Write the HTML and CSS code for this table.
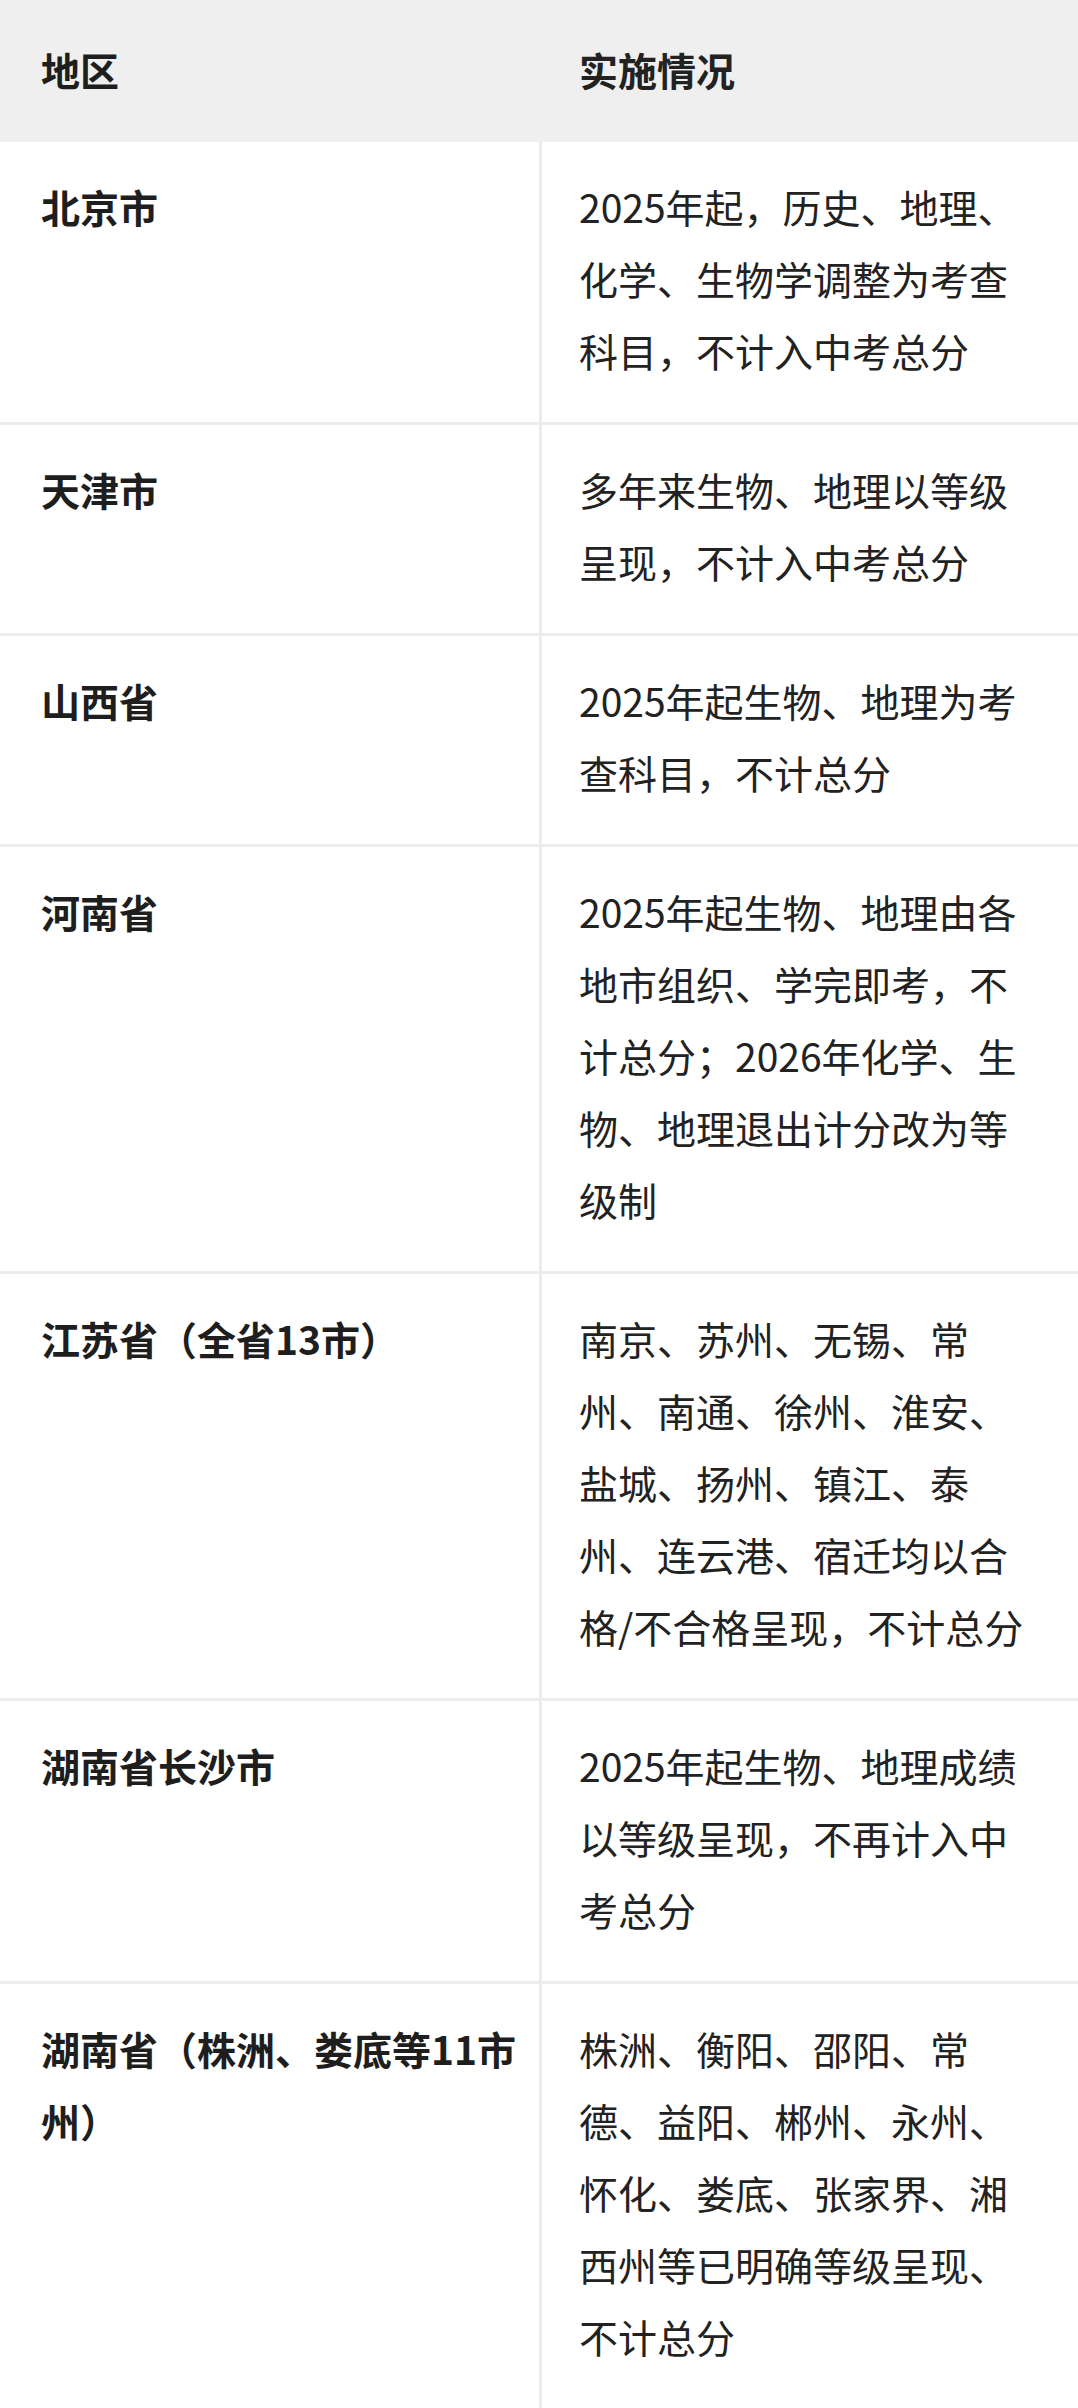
FILE: index.html
```html
<!DOCTYPE html>
<html>
<head>
<meta charset="utf-8">
<title>各地中考科目调整</title>
<link rel="stylesheet" href="styles.css">
</head>
<body>
<div class="table">
<div class="row head">
<div class="cell area">地区</div>
<div class="cell info">实施情况</div>
</div>
<div class="row">
<div class="cell area">北京市</div>
<div class="cell info">2025年起，历史、地理、化学、生物学调整为考查科目，不计入中考总分</div>
</div>
<div class="row">
<div class="cell area">天津市</div>
<div class="cell info">多年来生物、地理以等级呈现，不计入中考总分</div>
</div>
<div class="row">
<div class="cell area">山西省</div>
<div class="cell info">2025年起生物、地理为考查科目，不计总分</div>
</div>
<div class="row">
<div class="cell area">河南省</div>
<div class="cell info">2025年起生物、地理由各地市组织、学完即考，不计总分；2026年化学、生物、地理退出计分改为等级制</div>
</div>
<div class="row">
<div class="cell area">江苏省（全省13市）</div>
<div class="cell info">南京、苏州、无锡、常州、南通、徐州、淮安、盐城、扬州、镇江、泰州、连云港、宿迁均以合格/不合格呈现，不计总分</div>
</div>
<div class="row">
<div class="cell area">湖南省长沙市</div>
<div class="cell info">2025年起生物、地理成绩以等级呈现，不再计入中考总分</div>
</div>
<div class="row">
<div class="cell area">湖南省（株洲、娄底等11市州）</div>
<div class="cell info">株洲、衡阳、邵阳、常德、益阳、郴州、永州、怀化、娄底、张家界、湘西州等已明确等级呈现、不计总分</div>
</div>
</div>
</body>
</html>
```

FILE: styles.css
```css
body{
margin:0;
background:#fff;
color:#222;
font-family:"Noto Sans CJK SC","Noto Sans",sans-serif;
}
.table{
width:1078px;
}
.row{
display:grid;
grid-template-columns:539px 1fr;
border-top:3px solid #ececec;
}
.row.head{
border-top:none;
background:#efefef;
}
.row.head + .row{
border-top:none;
}
.cell{
font-size:39px;
line-height:72px;
padding:28px 18px 36px 41px;
}
.head .cell{
padding-top:33px;
padding-bottom:37px;
font-weight:700;
}
.area{
font-weight:600;
color:#1e1e1e;
}
.info{
border-left:3px solid #ececec;
padding-left:37px;
padding-right:42px;
}
.head .info{
border-left:none;
padding-left:40px;
}
```
